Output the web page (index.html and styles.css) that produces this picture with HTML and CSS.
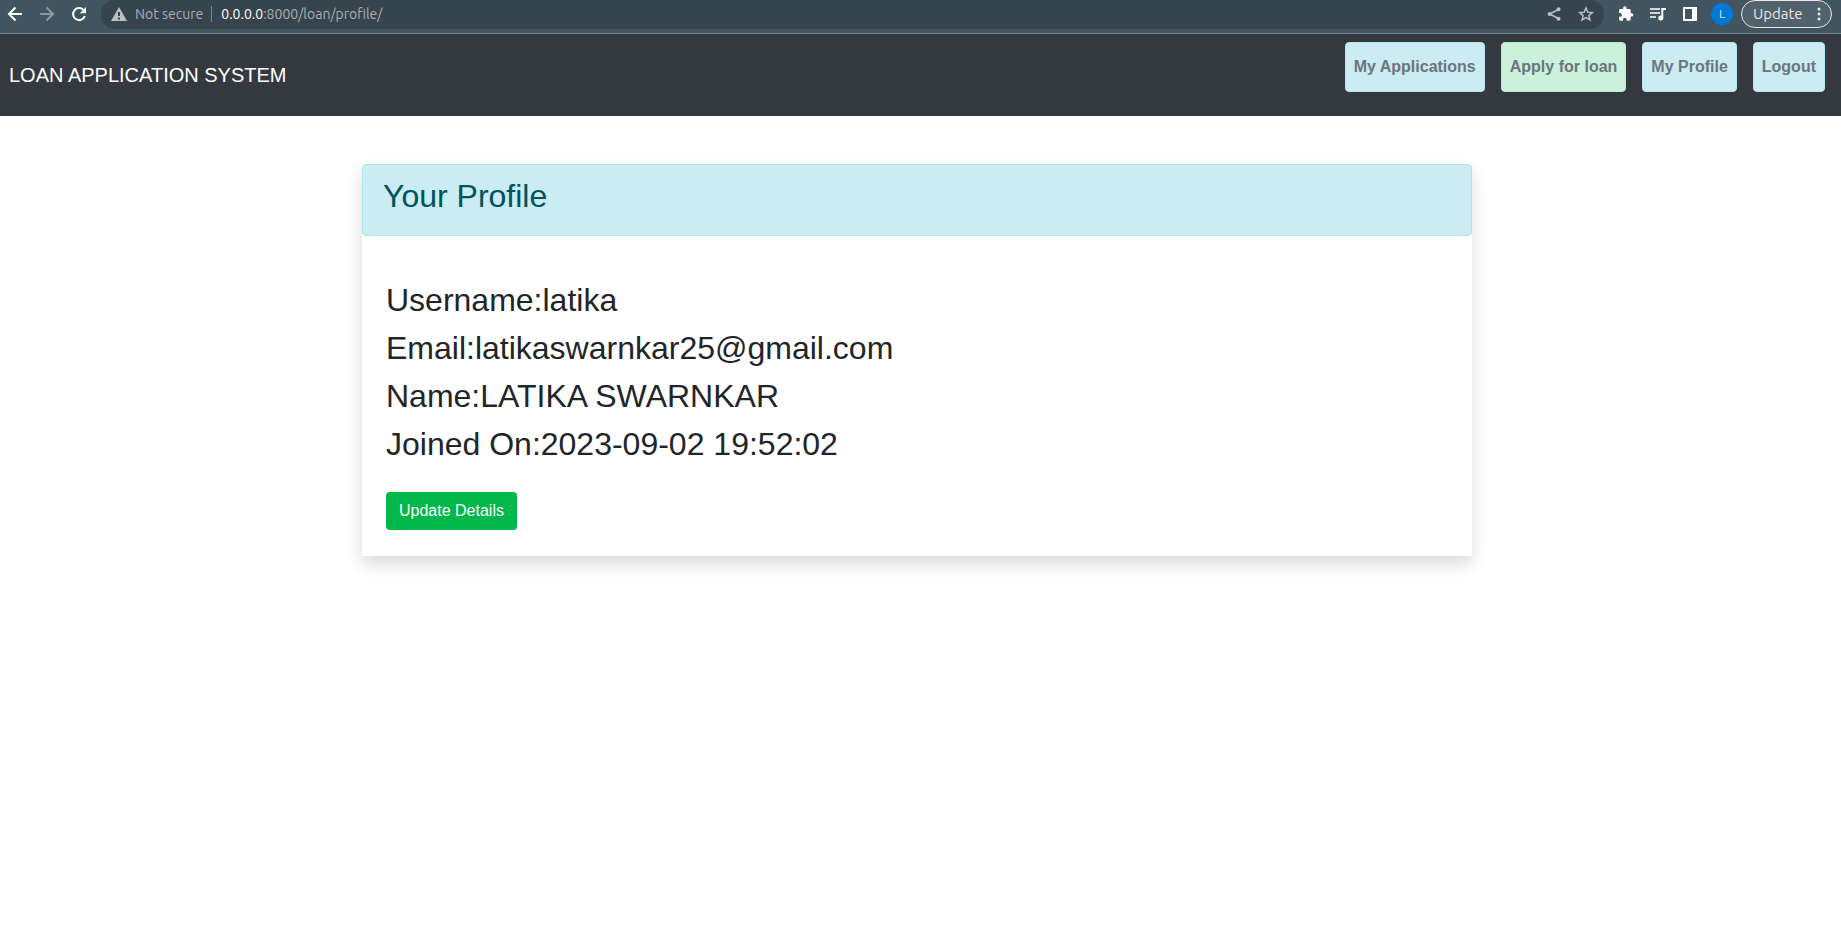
FILE: index.html
```html
<!DOCTYPE html>
<html lang="en">
<head>
<meta charset="utf-8">
<title>Your Profile</title>
<link rel="stylesheet" href="styles.css">
</head>
<body>
<div class="toolbar">
  <button class="tool" aria-label="Back"><svg viewBox="0 0 20 20"><path d="M17 10H4.500M10.500 3.500 4 10l6.500 6.500" fill="none" stroke="currentColor" stroke-width="2"/></svg></button>
  <button class="tool tool-dim" aria-label="Forward"><svg viewBox="0 0 20 20"><path d="M3 10h12.500M9.500 3.500 16 10l-6.500 6.500" fill="none" stroke="currentColor" stroke-width="2"/></svg></button>
  <button class="tool" aria-label="Reload"><svg viewBox="0 0 20 20"><path d="M15.800 12A6 6 0 1 1 14.300 5.800" fill="none" stroke="currentColor" stroke-width="2"/><path d="M17 3v6.200h-6.200z" fill="currentColor"/></svg></button>
  <div class="address">
    <svg class="warn" viewBox="0 0 18 18"><path fill="currentColor" fill-rule="evenodd" d="M9 2 17 16H1zM8 7v4h2V7zm0 5.500v2h2v-2z"/></svg>
    <span class="security">Not secure</span>
    <span class="url"><b>0.0.0.0</b>:8000/loan/profile/</span>
    <button class="tool tool-soft" aria-label="Share"><svg viewBox="0 0 20 20"><path d="M14.500 5.500 5.500 10l9 4.500" fill="none" stroke="currentColor" stroke-width="1.500"/><g fill="currentColor"><circle cx="14.500" cy="5.300" r="2"/><circle cx="5.600" cy="10" r="2"/><circle cx="14.500" cy="14.700" r="2"/></g></svg></button>
    <button class="tool tool-soft" aria-label="Bookmark"><svg viewBox="0 0 20 20"><path d="m10 4 1.800 4.200 4.500.4-3.400 3 1 4.400L10 13.700 6.100 16l1-4.400-3.400-3 4.500-.4z" fill="none" stroke="currentColor" stroke-width="1.500"/></svg></button>
  </div>
  <div class="extensions">
    <button class="tool" aria-label="Extensions"><svg viewBox="0 0 24 24"><path fill="currentColor" d="M20.500 11H19V7a2 2 0 0 0-2-2h-4V3.500a2.500 2.500 0 0 0-5 0V5H4a2 2 0 0 0-2 2v3.800h1.500a2.700 2.700 0 0 1 0 5.400H2V20a2 2 0 0 0 2 2h3.800v-1.500a2.700 2.700 0 0 1 5.400 0V22H17a2 2 0 0 0 2-2v-4h1.500a2.500 2.500 0 0 0 0-5z" transform="translate(2 2) scale(.82)"/></svg></button>
    <button class="tool" aria-label="Media"><svg viewBox="0 0 20 20"><path d="M2 5h10M2 9h10M2 13h6" fill="none" stroke="currentColor" stroke-width="1.500"/><path d="M14.300 14V5H18" fill="none" stroke="currentColor" stroke-width="2"/><circle cx="12.800" cy="14" r="2.500" fill="currentColor"/></svg></button>
    <button class="tool" aria-label="Side panel"><svg viewBox="0 0 20 20"><path fill="currentColor" fill-rule="evenodd" d="M3 3h14v14H3zm2 2v10h7V5z"/></svg></button>
  </div>
  <button class="avatar" aria-label="Account">L</button>
  <button class="update">Update<svg viewBox="0 0 4 14"><g fill="currentColor"><circle cx="2" cy="2" r="1.500"/><circle cx="2" cy="7" r="1.500"/><circle cx="2" cy="12" r="1.500"/></g></svg></button>
</div>
<nav class="navbar">
  <a class="brand" href="#">LOAN APPLICATION SYSTEM</a>
  <div class="links">
    <a class="link" href="#">My Applications</a>
    <a class="link link-success" href="#">Apply for loan</a>
    <a class="link" href="#">My Profile</a>
    <a class="link" href="#">Logout</a>
  </div>
</nav>
<main class="main">
  <section class="card">
    <header class="card-header"><h2>Your Profile</h2></header>
    <div class="card-body">
      <div class="row">Username:latika</div>
      <div class="row">Email:latikaswarnkar25@gmail.com</div>
      <div class="row">Name:LATIKA SWARNKAR</div>
      <div class="row">Joined On:2023-09-02 19:52:02</div>
      <button class="submit">Update Details</button>
    </div>
  </section>
</main>
</body>
</html>
```
FILE: styles.css
```css
* {
  box-sizing: border-box;
}

body {
  margin: 0;
  background: #fff;
  color: #212529;
  font: 16px/24px "Liberation Sans", Arial, sans-serif;
}

button {
  margin: 0;
  padding: 0;
  border: 0;
  background: none;
  color: inherit;
  font: inherit;
}

a {
  text-decoration: none;
}

.toolbar {
  display: flex;
  align-items: flex-start;
  gap: 12px;
  height: 34px;
  padding: 0 9px 0 5px;
  border-bottom: 1px solid #6d858b;
  background: #40555f;
  color: #fff;
  font: 14px/28px Ubuntu, "Noto Sans", sans-serif;
}

.tool {
  display: flex;
  align-items: center;
  height: 28px;
}

.tool svg {
  width: 20px;
  height: 20px;
}

.tool-dim {
  color: #8c999f;
}

.tool-soft {
  color: #b9bfc3;
}

.address {
  display: flex;
  flex: 1;
  align-items: center;
  gap: 12px;
  height: 29px;
  padding: 0 8px 1px 9px;
  border-radius: 14px;
  background: #36444d;
  color: #a9afb3;
}

.warn {
  width: 18px;
  height: 18px;
  margin-right: -5px;
  color: #b9bfc3;
}

.security {
  line-height: 16px;
  padding-right: 8px;
  margin-right: -3px;
  border-right: 1px solid #7d878c;
}

.url {
  flex: 1;
  line-height: 16px;
}

.url b {
  color: #fff;
  font-weight: 400;
}

.extensions {
  display: flex;
  gap: 12px;
}

.avatar {
  width: 22px;
  height: 22px;
  margin: 3px -4px 0 -1px;
  border-radius: 50%;
  background: #0078d7;
  color: #d5ebfa;
  font-size: 12px;
  line-height: 22px;
}

.update {
  display: flex;
  align-items: center;
  justify-content: space-between;
  width: 91px;
  height: 28px;
  padding: 0 10px 0 11px;
  border: 1px solid #f5e3e0;
  border-radius: 14px;
  background: #50626c;
  color: #f5e3e0;
  font-size: 15px;
}

.update svg {
  width: 4px;
  height: 14px;
}

.navbar {
  display: flex;
  align-items: center;
  justify-content: space-between;
  padding: 8px 16px 8px 9px;
  background: #33393f;
}

.brand {
  color: #fff;
  font-size: 20px;
  line-height: 30px;
}

.links {
  display: flex;
  gap: 16px;
  padding-bottom: 16px;
}

.link {
  padding: 12px 8px;
  border: 1px solid #b3e7ed;
  border-radius: 4px;
  background: #caecf2;
  color: #6c757d;
  font-weight: 700;
}

.link-success {
  border-color: #b8ebcc;
  background: #caf1da;
}

.main {
  padding: 48px 22px 48px 15px;
}

.card {
  max-width: 1110px;
  margin: 0 auto;
  background: #fff;
  box-shadow: 0 8px 16px rgba(0, 0, 0, .15);
}

.card-header {
  padding: 12px 20px 20px;
  border: 1px solid #b0e6eb;
  border-radius: 4px;
  background: #caecf2;
  color: #00545e;
}

.card-header h2 {
  margin: 0;
  font-size: 32px;
  font-weight: 400;
  line-height: 38px;
}

.card-body {
  padding: 40px 24px 26px;
}

.row {
  font-size: 32px;
  line-height: 48px;
}

.submit {
  display: block;
  margin-top: 24px;
  padding: 7px 13px;
  border-radius: 4px;
  background: #00b74a;
  color: #fff;
}
```
